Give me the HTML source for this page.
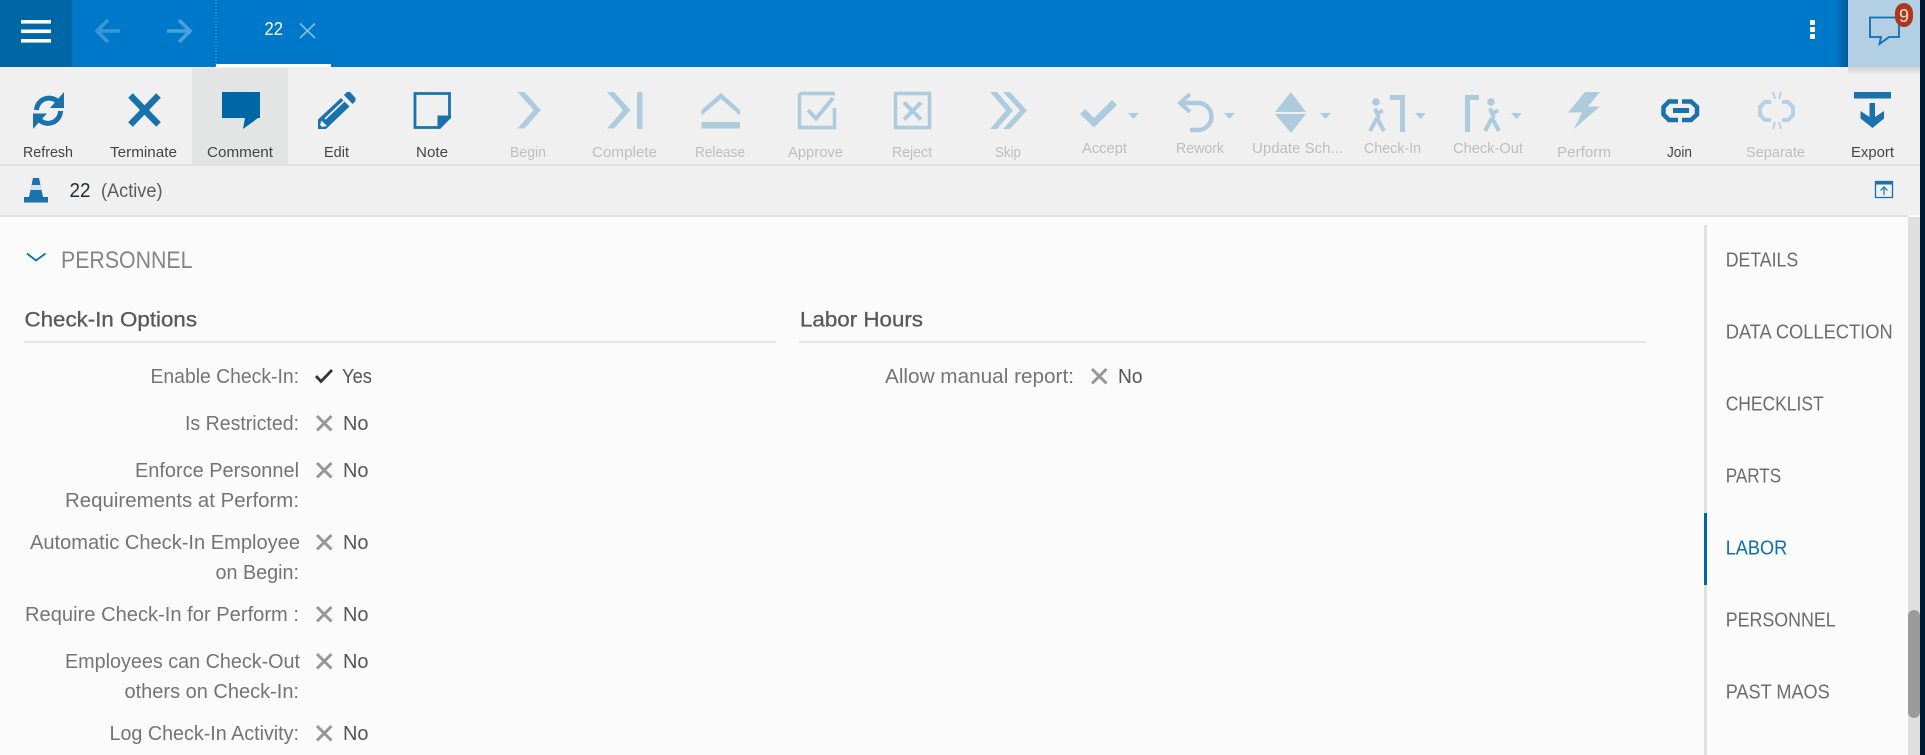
<!DOCTYPE html>
<html><head><meta charset="utf-8"><title>MAO 22</title>
<style>
html,body{margin:0;padding:0;background:#00172f;overflow:hidden}
svg{display:block}
text{font-family:"Liberation Sans",sans-serif;white-space:pre}
.tb{font-size:15px;fill:#444}
.td{font-size:15px;fill:#bdbdbd}
.lb{font-size:20.500px;fill:#747474}
.v{font-size:20.500px;fill:#555}
.nav{font-size:20.500px;fill:#6c6c6c}
.h{font-size:21.500px;fill:#585858;stroke:#585858;stroke-width:.3px}
</style></head>
<body>
<svg xmlns="http://www.w3.org/2000/svg" width="1925" height="755" viewBox="0 0 1925 755">
<defs>
<linearGradient id="sh" x1="0" x2="1"><stop offset="0" stop-color="#004f86" stop-opacity="0"/><stop offset="1" stop-color="#004f86" stop-opacity=".75"/></linearGradient>
<linearGradient id="sh2" x1="0" x2="0" y1="0" y2="1"><stop offset="0" stop-color="#999" stop-opacity=".35"/><stop offset="1" stop-color="#999" stop-opacity="0"/></linearGradient>
</defs>
<rect width="1925" height="755" fill="#00172f"/>
<rect width="1920" height="755" fill="#fbfbfb"/>
<!-- top bar -->
<rect width="1920" height="67" fill="#0078c9"/>
<rect width="72" height="67" fill="#0067a7"/>
<g fill="#fff"><rect x="21" y="20" width="30" height="3.600"/><rect x="21" y="29.500" width="30" height="3.600"/><rect x="21" y="39" width="30" height="3.600"/></g>
<g fill="none" stroke-width="3.600">
<path d="M120 31H98M108 20L97 31L108 42" stroke="#3a96d6"/>
<path d="M167 31H190M179 20L190 31L179 42" stroke="#4aa0db"/>
</g>
<path d="M216 0V67" stroke="#5fb0e4" stroke-width="1" stroke-dasharray="1 2"/>
<text x="264.500" y="35" font-size="18.500" fill="#fff" textLength="18.500" lengthAdjust="spacingAndGlyphs">22</text>
<path d="M300 23.500L315 38M315 23.500L300 38" stroke="#7fbbe4" stroke-width="1.800" fill="none"/>
<rect x="216" y="64" width="115" height="3" fill="#fff"/>
<g fill="#fff"><rect x="1810" y="20" width="5" height="5"/><rect x="1810" y="27" width="5" height="5"/><rect x="1810" y="34" width="5" height="5"/></g>
<rect x="1835" width="13" height="67" fill="url(#sh)"/>
<rect x="1848" width="72" height="67" fill="#b2cfe3"/>
<path d="M1870 17.500H1899V37H1889L1879.500 44L1881 37H1870Z" fill="none" stroke="#0b6fb0" stroke-width="1.800"/>
<rect x="1895" y="3" width="18" height="24" rx="9" ry="10" fill="#b03520"/>
<text x="1899" y="22" font-size="18" fill="#fbe6c8" textLength="10" lengthAdjust="spacingAndGlyphs">9</text>

<!-- toolbar -->
<rect y="67" width="1920" height="98" fill="#f0f0f0"/>
<rect x="192" y="68" width="96" height="97" fill="#e3e5e5"/>
<rect y="164" width="1920" height="2" fill="#e0e0e0"/>
<rect y="166" width="1920" height="49" fill="#f0f0f0"/>
<rect y="215" width="1908" height="2" fill="#e0e0e0"/>
<rect x="1848" y="67" width="72" height="8" fill="url(#sh2)"/>

<!-- enabled icons -->
<g fill="none" stroke="#1a72ad" stroke-width="5">
<path d="M36.500 110A12.500 12.500 0 0 1 58 102"/>
<path d="M60.500 111A12.500 12.500 0 0 1 39 119.500"/>
</g>
<g fill="#1a72ad"><path d="M64 92V108H50Z"/><path d="M33 129V113.500H47Z"/></g>
<path d="M130.500 95.500L158.500 124.500M158.500 95.500L130.500 124.500" stroke="#1a72ad" stroke-width="6.500" fill="none"/>
<path d="M222 92H260V118H258L243 129L245 118H222Z" fill="#0066a6"/>
<g fill="#1a72ad">
<path d="M344 95L347 92L350 92L355.500 98L355.500 101L352.500 104Z"/>
<path d="M341 98L349.500 106.500L326 129H318V119.500Z"/>
</g>
<path d="M325 119L344 101" stroke="#f0f0f0" stroke-width="1.800"/>
<path d="M321.500 120.500L327 126L322 127L320 125Z" fill="#f0f0f0"/>
<path d="M415 93.500H449.500V117L439.500 127.500H415Z" fill="none" stroke="#1a72ad" stroke-width="2.800"/>
<path d="M437.500 129V115.500H451L451 118L440 129Z" fill="#1a72ad"/>

<!-- disabled icons -->
<g fill="#aecbde">
<path d="M517.500 92H524.500L541 110L524.500 128.500H517.500L533.500 110Z"/>
<path d="M607 92H614L630.500 110L614 128.500H607L623 110Z"/><rect x="637" y="92" width="5.500" height="37"/>
<path d="M721 93L740 110V115.500L721 99L701.500 115.500V110Z"/><rect x="701.500" y="122" width="38.500" height="6.500"/>
<path d="M990 92H997L1013 110.500L997 129H990L1006 110.500Z"/>
<path d="M1003 92H1010L1027 110.500L1010 129H1003L1020 110.500Z"/>
<path d="M1080 114L1085 109L1094 118L1112 100L1117 105L1094 127.500Z"/>
<path d="M1128 113H1139L1133.500 119Z"/><path d="M1224 113H1235L1229.500 119Z"/><path d="M1320 113H1331L1325.500 119Z"/><path d="M1415 113H1426L1420.500 119Z"/><path d="M1511 113H1522L1516.500 119Z"/>
<path d="M1291 92L1306 112H1275Z"/><path d="M1291 133L1306 114H1275Z"/>
<path d="M1585 92H1600L1588 106.500H1600L1574 129L1582 112.500H1568Z"/>
</g>
<g fill="none" stroke="#aecbde">
<path d="M799.500 93.500H835M799.500 93.500V127.500H834.500V108" stroke-width="3.500"/>
<path d="M808 110L816 118.500L833 98" stroke-width="4"/>
<rect x="895.500" y="93.500" width="34" height="34" stroke-width="3.500"/>
<path d="M904 102.500L921 119.500M921 102.500L904 119.500" stroke-width="4"/>
<path d="M1180 103H1198A13.500 13.500 0 0 1 1198 130H1190" stroke-width="4.500"/>
<path d="M1190 94L1180 103L1190 112" stroke-width="4"/>
</g>
<g fill="#aecbde">
<circle cx="1376" cy="102" r="3.800"/>
<path d="M1390 95H1405V132H1400V100H1390Z"/>
<path d="M1465 95H1479V100H1470V132H1465Z"/>
<circle cx="1491" cy="102" r="3.800"/>
</g>
<g fill="none" stroke="#aecbde" stroke-width="4">
<path d="M1375 108.500L1377 113.500L1383 110.500M1377 113.500L1379 118M1377 118L1370 131M1377 118L1384 131"/>
<path d="M1490 108.500L1492 113.500L1498 110.500M1492 113.500L1494 118M1492 118L1485 131M1492 118L1499 131"/>
</g>
<g fill="none" stroke="#b7d0e2" stroke-width="4">
<path d="M1771 102H1765L1760 107V115L1765 120H1771"/>
<path d="M1782 102H1788L1793 107V115L1788 120H1782"/>
<path d="M1773 92L1775 99M1781 92L1779 99M1773 129L1775 122M1781 129L1779 122" stroke-width="2"/>
</g>
<g fill="none" stroke="#1a72ad" stroke-width="4.500">
<path d="M1678 101.500H1669L1663.500 107V114.500L1669 120H1678"/>
<path d="M1682 101.500H1691L1697 107V114.500L1691 120H1682"/>
</g>
<rect x="1673" y="108" width="16" height="5" fill="#1a72ad"/>
<rect x="1854" y="92" width="37" height="6.500" fill="#1a72ad"/>
<path d="M1869.500 103H1875V117L1884 111V118.500L1872.500 128L1860.500 118.500V111L1869.500 117Z" fill="#1a72ad"/>

<!-- toolbar labels -->
<text class="tb" x="23" y="157" textLength="50" lengthAdjust="spacingAndGlyphs">Refresh</text>
<text class="tb" x="110" y="157" textLength="67" lengthAdjust="spacingAndGlyphs">Terminate</text>
<text class="tb" x="207" y="157" textLength="66" lengthAdjust="spacingAndGlyphs">Comment</text>
<text class="tb" x="324" y="157" textLength="25" lengthAdjust="spacingAndGlyphs">Edit</text>
<text class="tb" x="416" y="157" textLength="32" lengthAdjust="spacingAndGlyphs">Note</text>
<text class="td" x="510" y="157" textLength="36" lengthAdjust="spacingAndGlyphs">Begin</text>
<text class="td" x="592" y="157" textLength="65" lengthAdjust="spacingAndGlyphs">Complete</text>
<text class="td" x="695" y="157" textLength="50" lengthAdjust="spacingAndGlyphs">Release</text>
<text class="td" x="788" y="157" textLength="55" lengthAdjust="spacingAndGlyphs">Approve</text>
<text class="td" x="892" y="157" textLength="40" lengthAdjust="spacingAndGlyphs">Reject</text>
<text class="td" x="995" y="157" textLength="26" lengthAdjust="spacingAndGlyphs">Skip</text>
<text class="td" x="1082" y="153" textLength="45" lengthAdjust="spacingAndGlyphs">Accept</text>
<text class="td" x="1176" y="153" textLength="48" lengthAdjust="spacingAndGlyphs">Rework</text>
<text class="td" x="1252" y="153" textLength="91" lengthAdjust="spacingAndGlyphs">Update Sch...</text>
<text class="td" x="1364" y="153" textLength="57" lengthAdjust="spacingAndGlyphs">Check-In</text>
<text class="td" x="1453" y="153" textLength="70" lengthAdjust="spacingAndGlyphs">Check-Out</text>
<text class="td" x="1557" y="157" textLength="54" lengthAdjust="spacingAndGlyphs">Perform</text>
<text class="tb" x="1667" y="157" textLength="25" lengthAdjust="spacingAndGlyphs">Join</text>
<text class="td" x="1746" y="157" textLength="59" lengthAdjust="spacingAndGlyphs">Separate</text>
<text class="tb" x="1851" y="157" textLength="43" lengthAdjust="spacingAndGlyphs">Export</text>

<!-- info bar -->
<path d="M33 178H39L43 197H29Z" fill="#1a72ad"/>
<rect x="24" y="197" width="24" height="5.500" fill="#1a72ad"/>
<path d="M31.500 185H40.500L41.500 190H30.500Z" fill="#d5e3ed"/>
<text x="69.500" y="197" font-size="20" fill="#1f2a36" textLength="21" lengthAdjust="spacingAndGlyphs">22</text>
<text x="101" y="197" font-size="19" fill="#5c5c5c" textLength="61.500" lengthAdjust="spacingAndGlyphs">(Active)</text>
<rect x="1875.500" y="181.500" width="17" height="16" fill="#f0f0f0" stroke="#1a72ad" stroke-width="1.300"/>
<rect x="1875" y="181" width="18" height="3.500" fill="#1a72ad"/>
<path d="M1884 195V187.500M1880.500 190.500L1884 187L1887.500 190.500" fill="none" stroke="#1a72ad" stroke-width="1.200"/>

<!-- section -->
<path d="M27 253.500L36 260.500L45.500 253.500" fill="none" stroke="#0a70b0" stroke-width="1.800"/>
<text x="61" y="268" font-size="24.500" fill="#858585" textLength="131.500" lengthAdjust="spacingAndGlyphs">PERSONNEL</text>
<text class="h" x="24.500" y="326.500" textLength="172.500" lengthAdjust="spacingAndGlyphs">Check-In Options</text>
<rect x="24" y="341" width="752" height="2" fill="#e6e6e6"/>
<text class="h" x="800" y="326.500" textLength="123" lengthAdjust="spacingAndGlyphs">Labor Hours</text>
<rect x="799" y="341" width="847" height="2" fill="#e6e6e6"/>

<!-- labels -->
<text class="lb" x="150.500" y="383" textLength="148.500" lengthAdjust="spacingAndGlyphs">Enable Check-In:</text>
<text class="lb" x="185" y="430" textLength="114" lengthAdjust="spacingAndGlyphs">Is Restricted:</text>
<text class="lb" x="135" y="477" textLength="164" lengthAdjust="spacingAndGlyphs">Enforce Personnel</text>
<text class="lb" x="65" y="507" textLength="234" lengthAdjust="spacingAndGlyphs">Requirements at Perform:</text>
<text class="lb" x="30" y="549" textLength="270" lengthAdjust="spacingAndGlyphs">Automatic Check-In Employee</text>
<text class="lb" x="215.500" y="579" textLength="83.500" lengthAdjust="spacingAndGlyphs">on Begin:</text>
<text class="lb" x="25" y="621" textLength="274" lengthAdjust="spacingAndGlyphs">Require Check-In for Perform :</text>
<text class="lb" x="65" y="668" textLength="235" lengthAdjust="spacingAndGlyphs">Employees can Check-Out</text>
<text class="lb" x="124.500" y="698" textLength="174.500" lengthAdjust="spacingAndGlyphs">others on Check-In:</text>
<text class="lb" x="109.500" y="740" textLength="189.500" lengthAdjust="spacingAndGlyphs">Log Check-In Activity:</text>
<text class="lb" x="885" y="383" textLength="189" lengthAdjust="spacingAndGlyphs">Allow manual report:</text>

<!-- values -->
<path d="M316 376L321 381.500L332 370" fill="none" stroke="#333" stroke-width="2.800"/>
<text class="v" x="342" y="383" textLength="30" lengthAdjust="spacingAndGlyphs">Yes</text>
<g fill="none" stroke="#979797" stroke-width="3">
<path d="M317 416L331.500 430.500M331.500 416L317 430.500"/>
<path d="M317 463L331.500 477.500M331.500 463L317 477.500"/>
<path d="M317 535L331.500 549.500M331.500 535L317 549.500"/>
<path d="M317 607L331.500 621.500M331.500 607L317 621.500"/>
<path d="M317 654L331.500 668.500M331.500 654L317 668.500"/>
<path d="M317 726L331.500 740.500M331.500 726L317 740.500"/>
<path d="M1092 369L1106.500 383.500M1106.500 369L1092 383.500"/>
</g>
<text class="v" x="343" y="430" textLength="25.500" lengthAdjust="spacingAndGlyphs">No</text>
<text class="v" x="343" y="477" textLength="25.500" lengthAdjust="spacingAndGlyphs">No</text>
<text class="v" x="343" y="549" textLength="25.500" lengthAdjust="spacingAndGlyphs">No</text>
<text class="v" x="343" y="621" textLength="25.500" lengthAdjust="spacingAndGlyphs">No</text>
<text class="v" x="343" y="668" textLength="25.500" lengthAdjust="spacingAndGlyphs">No</text>
<text class="v" x="343" y="740" textLength="25.500" lengthAdjust="spacingAndGlyphs">No</text>
<text class="v" x="1118" y="383" textLength="24.500" lengthAdjust="spacingAndGlyphs">No</text>

<!-- side nav -->
<rect x="1704" y="225" width="3" height="530" fill="#e0e0e0"/>
<rect x="1704" y="513" width="3" height="72" fill="#0067a7"/>
<text class="nav" x="1725.700" y="266.500" textLength="72.500" lengthAdjust="spacingAndGlyphs">DETAILS</text>
<text class="nav" x="1725.700" y="338.500" textLength="167" lengthAdjust="spacingAndGlyphs">DATA COLLECTION</text>
<text class="nav" x="1725.700" y="410.500" textLength="98" lengthAdjust="spacingAndGlyphs">CHECKLIST</text>
<text class="nav" x="1725.700" y="482.500" textLength="55.500" lengthAdjust="spacingAndGlyphs">PARTS</text>
<text class="nav" x="1725.700" y="554.500" style="fill:#0a6fb0" textLength="61.500" lengthAdjust="spacingAndGlyphs">LABOR</text>
<text class="nav" x="1725.700" y="626.500" textLength="110" lengthAdjust="spacingAndGlyphs">PERSONNEL</text>
<text class="nav" x="1725.700" y="698.500" textLength="104" lengthAdjust="spacingAndGlyphs">PAST MAOS</text>

<!-- scrollbar -->
<rect x="1908" y="217" width="12" height="538" fill="#dfdfdf"/>
<rect x="1908" y="610" width="12" height="108" rx="6" fill="#9a9a9a"/>
</svg>
</body></html>
